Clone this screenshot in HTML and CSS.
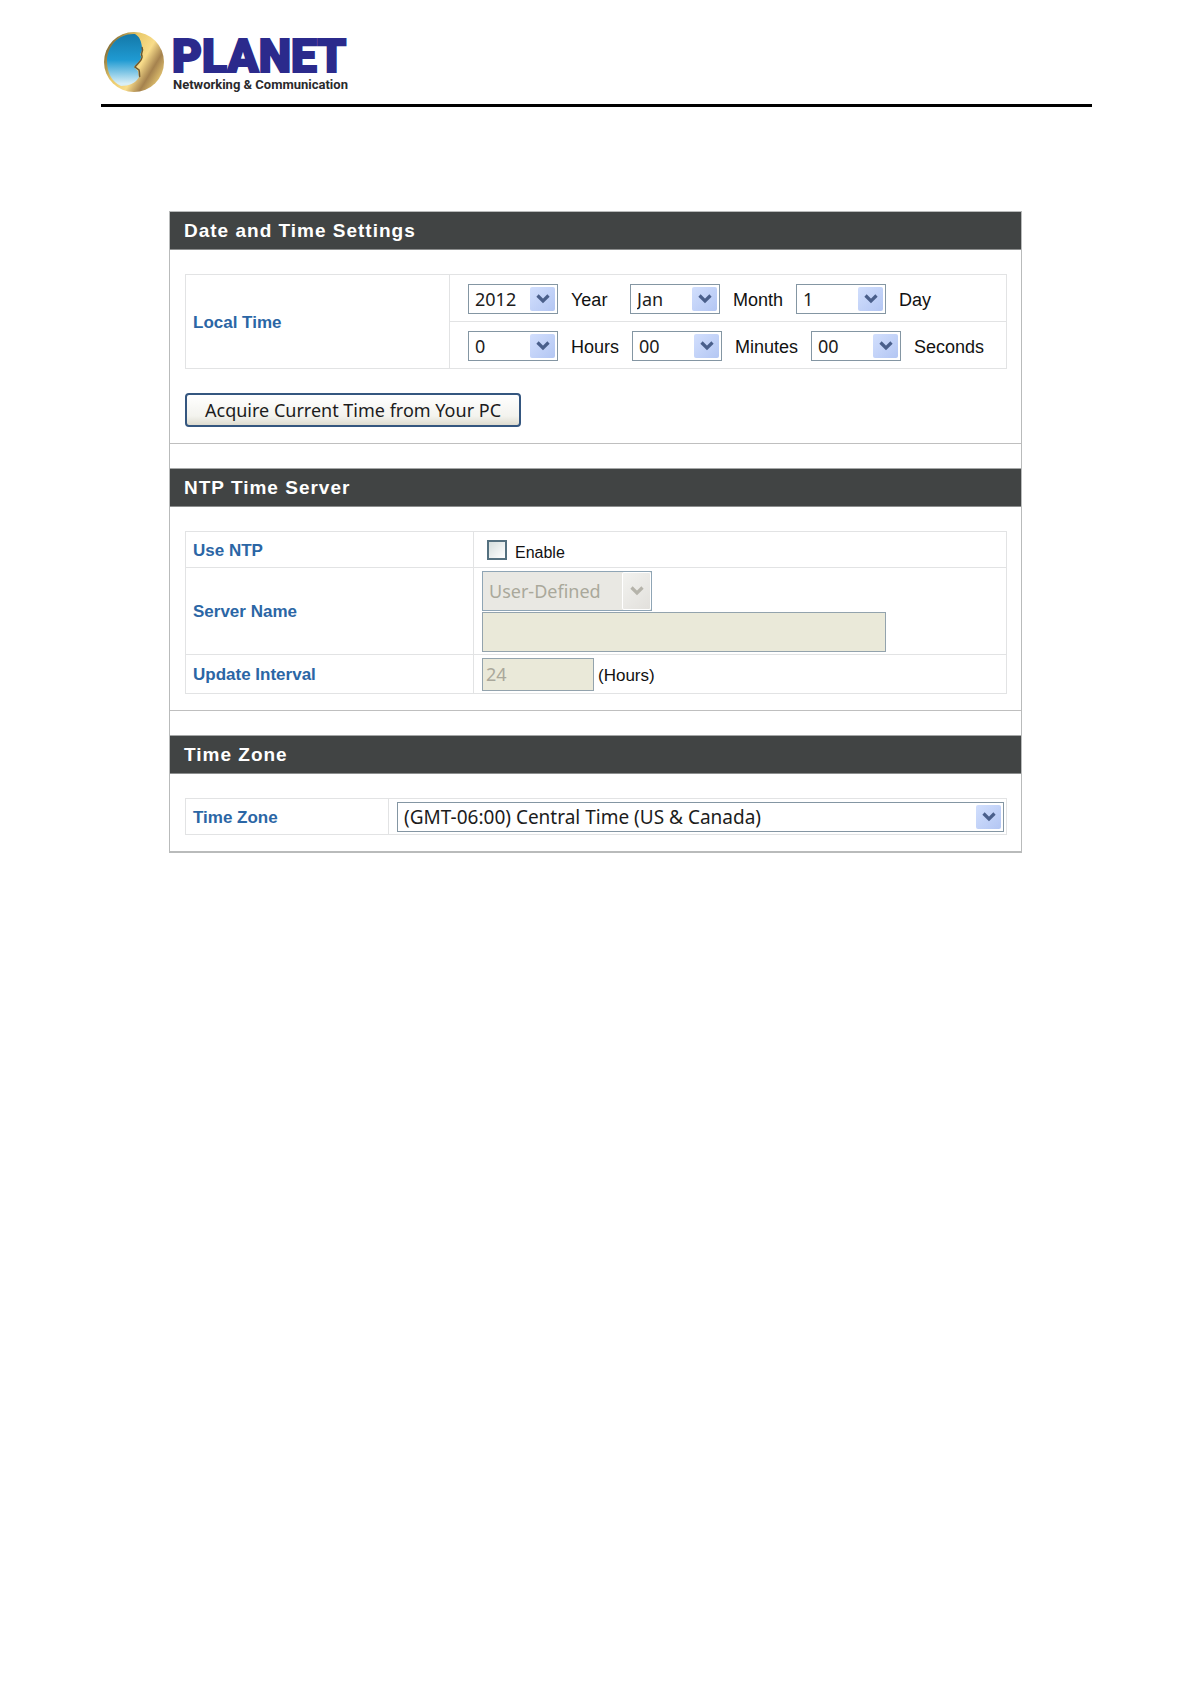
FILE: index.html
```html
<!DOCTYPE html>
<html lang="en">
<head>
<meta charset="utf-8">
<meta name="viewport" content="width=device-width, initial-scale=1">
<title>Date and Time Settings</title>
<link rel="stylesheet" href="styles.css">
</head>
<body>
<svg class="defs" aria-hidden="true">
  <symbol id="chevron" viewBox="0 0 14 10"><path d="M1.5 1.5 L7 7 L12.5 1.5" fill="none" stroke="currentColor" stroke-width="3.2"/></symbol>
</svg>
<header class="masthead">
  <svg class="logo" viewBox="0 0 260 64" role="img" aria-label="PLANET Networking &amp; Communication">
    <defs>
      <linearGradient id="gold" x1="0" y1="0.2" x2="1" y2="0.8">
        <stop offset="0" stop-color="#6d5a2c"/>
        <stop offset="0.35" stop-color="#e9c96a"/>
        <stop offset="0.6" stop-color="#f8dc8a"/>
        <stop offset="0.78" stop-color="#a5824e"/>
        <stop offset="1" stop-color="#f5d77a"/>
      </linearGradient>
      <linearGradient id="sky" x1="0" y1="0" x2="0" y2="1">
        <stop offset="0" stop-color="#1478a8"/>
        <stop offset="0.5" stop-color="#1f9ad2"/>
        <stop offset="0.95" stop-color="#d8eef6"/>
      </linearGradient>
    </defs>
    <circle cx="33" cy="32" r="30" fill="url(#gold)"/>
    <path d="M34 4 C18 3 6 16 6 31 C6 43 11 52 20 56 C28 56 35 53 38 47 C37 44 38 42 36 40 L33 37 C35 34 41 30 40 26 C38 24 42 22 41 17 C40 11 39 7 34 4 Z" fill="url(#sky)"/>
    <path d="M41 17 C43 22 39 23 41 26 C42 30 36 34 34 37 L38 40 C39 43 38 46 39 47" fill="none" stroke="#6b5730" stroke-width="1.5"/>
    <text class="logo-name" x="71" y="42">PLANET</text>
    <text class="logo-tagline" x="72" y="59">Networking &amp; Communication</text>
  </svg>
</header>
<main class="panel">
  <section class="section">
    <h2 class="section-title">Date and Time Settings</h2>
    <div class="section-body">
      <table class="settings local-time">
        <tr>
          <th rowspan="2" scope="rowgroup">Local Time</th>
          <td>
            <div class="fields">
              <span class="select"><select id="year"><option>2012</option></select><span class="arrow"><svg><use href="#chevron"/></svg></span></span>
              <label for="year">Year</label>
              <span class="select"><select id="month"><option>Jan</option></select><span class="arrow"><svg><use href="#chevron"/></svg></span></span>
              <label for="month">Month</label>
              <span class="select"><select id="day"><option>1</option></select><span class="arrow"><svg><use href="#chevron"/></svg></span></span>
              <label for="day">Day</label>
            </div>
          </td>
        </tr>
        <tr>
          <td>
            <div class="fields">
              <span class="select"><select id="hours"><option>0</option></select><span class="arrow"><svg><use href="#chevron"/></svg></span></span>
              <label for="hours">Hours</label>
              <span class="select"><select id="minutes"><option>00</option></select><span class="arrow"><svg><use href="#chevron"/></svg></span></span>
              <label for="minutes">Minutes</label>
              <span class="select"><select id="seconds"><option>00</option></select><span class="arrow"><svg><use href="#chevron"/></svg></span></span>
              <label for="seconds">Seconds</label>
            </div>
          </td>
        </tr>
      </table>
      <button class="button" type="button">Acquire Current Time from Your PC</button>
    </div>
  </section>

  <section class="section">
    <h2 class="section-title">NTP Time Server</h2>
    <div class="section-body">
      <table class="settings ntp">
        <tr class="row-enable">
          <th scope="row">Use NTP</th>
          <td><div class="check"><input type="checkbox" id="use-ntp"><label for="use-ntp">Enable</label></div></td>
        </tr>
        <tr class="row-server">
          <th scope="row" id="server-name">Server Name</th>
          <td>
            <div class="server">
              <span class="select select-disabled"><select aria-labelledby="server-name" disabled><option>User-Defined</option></select><span class="arrow"><svg><use href="#chevron"/></svg></span></span>
              <input class="text" type="text" aria-labelledby="server-name" disabled>
            </div>
          </td>
        </tr>
        <tr class="row-interval">
          <th scope="row"><label for="interval">Update Interval</label></th>
          <td><div class="interval"><input class="text" type="text" id="interval" value="24" disabled><span class="unit">(Hours)</span></div></td>
        </tr>
      </table>
    </div>
  </section>

  <section class="section">
    <h2 class="section-title">Time Zone</h2>
    <div class="section-body">
      <table class="settings zone">
        <tr>
          <th scope="row"><label for="zone">Time Zone</label></th>
          <td><span class="select select-wide"><select id="zone"><option>(GMT-06:00) Central Time (US &amp; Canada)</option></select><span class="arrow"><svg><use href="#chevron"/></svg></span></span></td>
        </tr>
      </table>
    </div>
  </section>
</main>
</body>
</html>
```
FILE: styles.css
```css
* { box-sizing: border-box; }

body {
  margin: 0;
  padding: 30px 98px 0 101px;
  background: #fff;
  color: #111;
  font: 18px/22px "Liberation Sans", Arial, sans-serif;
}

.defs { display: none; }

/* Masthead */
.masthead { border-bottom: 3px solid #000; padding-bottom: 10px; }
.logo { display: block; width: 260px; height: 64px; }
.logo-name {
  font: 900 46px Roboto, sans-serif;
  fill: #2b2a8c;
  stroke: #2b2a8c;
  stroke-width: 2px;
}
.logo-tagline {
  font: bold 13px Roboto, sans-serif;
  fill: #2a2a2c;
}

/* Panel */
.panel {
  margin: 104px 70px 0 68px;
  border: 1px solid #b9bbbb;
  border-bottom-width: 2px;
}
.section + .section { border-top: 1px solid #bfbfbf; padding-top: 24px; }
.section-title {
  margin: 0;
  padding: 8px 14px 7px;
  border-bottom: 1px solid #8c8e8e;
  background: #414444;
  color: #fff;
  font-size: 19px;
  line-height: 22px;
  letter-spacing: 1px;
}
.section + .section .section-title { border-top: 1px solid #a5a7a7; }
.section-body { padding: 24px 14px 16px 15px; }

/* Settings tables */
.settings { width: 100%; border-collapse: collapse; }
.settings th, .settings td { border: 1px solid #e2e3e4; padding: 0; }
.settings th {
  padding: 2px 0 0 7px;
  color: #2b66a5;
  font-size: 17px;
  text-align: left;
}
.local-time th { width: 264px; }
.local-time td { height: 47px; padding: 2px 0 0 18px; }
.ntp th { width: 288px; }
.ntp td { padding-left: 8px; }
.row-enable td { height: 36px; }
.row-server td { height: 87px; }
.row-interval td { height: 39px; }
.zone th { width: 203px; }
.zone td { height: 36px; padding: 0 2px 0 8px; }

.fields { display: flex; align-items: center; gap: 13px; }
.fields label { min-width: 46px; padding-top: 2px; }

/* Controls */
.select { display: grid; flex: none; width: 90px; height: 30px; }
.select select, .arrow { grid-area: 1 / 1; }
.select select {
  appearance: none;
  width: 100%;
  margin: 0;
  padding: 0 28px 0 6px;
  border: 1px solid #8496a3;
  border-radius: 0;
  background: #fff;
  color: #1c1c1c;
  font: 18px/24px "Noto Sans", Tahoma, sans-serif;
}
.arrow {
  display: grid;
  place-items: center;
  align-self: center;
  justify-self: end;
  width: 25px;
  height: 24px;
  margin-right: 3px;
  border-radius: 2px;
  background: linear-gradient(135deg, #d2dffd, #b3c6f3);
  color: #4a5f8b;
  pointer-events: none;
}
.arrow svg { width: 14px; height: 10px; }
.select-wide { width: 100%; }
.select-wide select { font-size: 19px; }

.select-disabled { width: 170px; height: 40px; }
.select-disabled select {
  border-color: #8fa5b5;
  background: #e9e8e3;
  color: #aaa89b;
  opacity: 1;
}
.select-disabled .arrow {
  width: 29px;
  height: 38px;
  margin-right: 1px;
  border: 1px solid #fff;
  background: linear-gradient(135deg, #f2f2ef, #e2e0dc);
  color: #b5b3aa;
}

.text {
  height: 33px;
  margin: 0;
  padding: 0 3px;
  border: 1px solid #93a3ad;
  border-radius: 0;
  background: #eae9d9;
  color: #aaa89b;
  font: 18px/24px "Noto Sans", Tahoma, sans-serif;
}
.server { display: flex; flex-direction: column; gap: 1px; }
.server .text { width: 404px; height: 40px; }
.interval { display: flex; align-items: center; gap: 4px; font-size: 17px; }
.interval .text { width: 112px; }
.unit { padding-top: 4px; }

.check { display: flex; align-items: center; gap: 8px; padding-left: 5px; }
.check input {
  appearance: none;
  width: 20px;
  height: 20px;
  margin: 0;
  border: 2px solid #54707f;
  background: linear-gradient(135deg, #d5dedd, #fff);
}
.check label { padding-top: 6px; font-size: 16px; }

.button {
  display: block;
  height: 34px;
  margin-top: 24px;
  padding: 0 18px;
  border: 2px solid #34567f;
  border-radius: 4px;
  background: linear-gradient(#fff, #f3f3ee 70%, #dedcd0);
  color: #1c1c1c;
  font: 18px/24px "Noto Sans", Tahoma, sans-serif;
}
```
